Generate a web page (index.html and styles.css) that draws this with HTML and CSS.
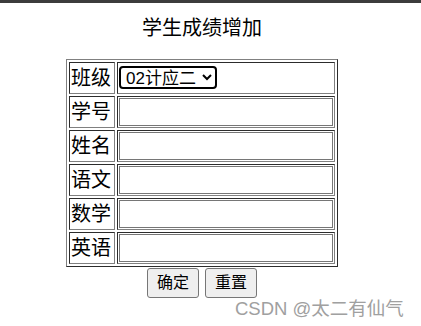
FILE: index.html
```html
<!DOCTYPE html>
<html>
<head>
  <meta charset="utf-8">
  <title>学生成绩增加</title>
  <link rel="stylesheet" href="styles.css">
</head>
<body>
  <div class="topbar"></div>
  <div class="page">
    <h1 class="title">学生成绩增加</h1>
    <form class="score-form">
      <table class="score-table">
        <tr>
          <td class="label">班级</td>
          <td class="field">
            <select name="classname">
              <option>02计应二</option>
              <option>02计应一</option>
            </select>
          </td>
        </tr>
        <tr>
          <td class="label">学号</td>
          <td class="field"><input type="text" name="sno"></td>
        </tr>
        <tr>
          <td class="label">姓名</td>
          <td class="field"><input type="text" name="sname"></td>
        </tr>
        <tr>
          <td class="label">语文</td>
          <td class="field"><input type="text" name="chinese"></td>
        </tr>
        <tr>
          <td class="label">数学</td>
          <td class="field"><input type="text" name="math"></td>
        </tr>
        <tr>
          <td class="label">英语</td>
          <td class="field"><input type="text" name="english"></td>
        </tr>
      </table>
      <div class="actions">
        <button type="submit">确定</button>
        <button type="reset">重置</button>
      </div>
    </form>
    <div class="watermark">CSDN @太二有仙气</div>
  </div>
</body>
</html>
```

FILE: styles.css
```css
* {
  box-sizing: border-box;
}

body {
  margin: 0;
  background: #fff;
  color: #000;
  font-family: "Liberation Sans", "Noto Sans CJK SC", sans-serif;
}

.topbar {
  height: 3px;
  background: #3c3c3c;
}

.page {
  position: relative;
  width: 404px;
  height: 323px;
  display: flex;
  flex-direction: column;
  align-items: center;
}

.title {
  margin: 11px 0 17px;
  font-size: 20px;
  font-weight: normal;
  line-height: 28px;
}

.score-form {
  display: flex;
  flex-direction: column;
  align-items: center;
}

.score-table {
  border-collapse: separate;
  border-spacing: 2px;
  border: 1px outset #808080;
}

.score-table td {
  height: 32px;
  border: 1px inset #808080;
  padding: 1px;
  font-size: 20px;
  line-height: 28px;
}

.label {
  width: 46px;
  padding-top: 2px;
  white-space: nowrap;
}

.field {
  width: 218px;
}

.field input {
  display: block;
  width: 214px;
  height: 28px;
  margin: 0;
  padding: 1px 2px;
  border: 1px solid #767676;
  font-size: 16px;
}

.field select {
  display: block;
  width: 98px;
  height: 23px;
  margin: 2px 0 3px;
  padding: 0 1px;
  border: 2px solid #000;
  border-radius: 4px;
  background: #fff;
  color: #000;
  font-family: "Liberation Sans", "Noto Sans CJK SC", sans-serif;
  font-size: 17px;
}

.actions {
  display: flex;
  gap: 6px;
  margin-top: 1px;
}

.actions button {
  padding: 4px 9px;
  border: 1px solid #767676;
  border-radius: 3px;
  background: #efefef;
  color: #000;
  font-family: "Liberation Sans", "Noto Sans CJK SC", sans-serif;
  font-size: 16px;
  line-height: 20px;
}

.watermark {
  position: absolute;
  left: 235px;
  top: 296px;
  color: #a0a0a0;
  font-size: 18.5px;
  line-height: 20px;
  white-space: nowrap;
}
```
